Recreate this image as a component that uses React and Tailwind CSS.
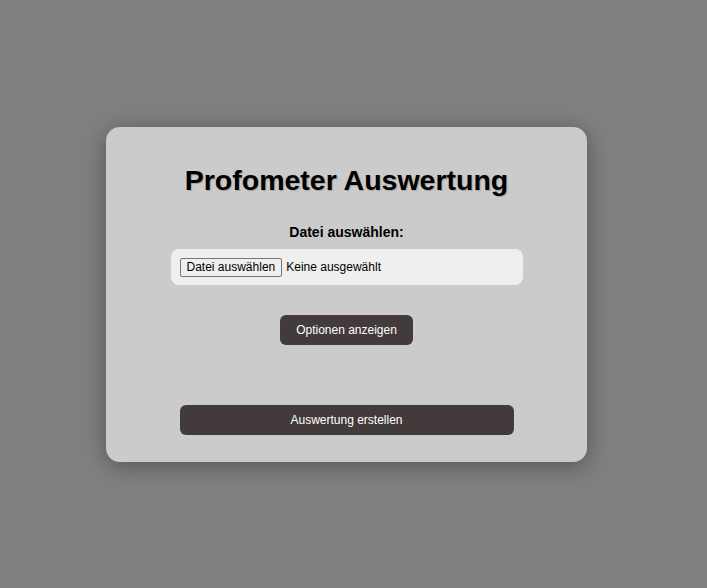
export default function App() {
  return (
    <div className="min-h-[588px] w-full bg-[#808080] flex justify-start pl-[106px] pt-[127px]" style={{ fontFamily: '"Liberation Sans", Arial, sans-serif' }}>
      <div className="w-[481px] h-[335px] bg-[#cbcbcb] rounded-[14px] shadow-[0_4px_24px_rgba(0,0,0,0.35)] flex flex-col items-center pt-[36px]">
        <h1 className="text-[28.5px] font-bold leading-[34px] text-black [text-shadow:1px_1px_1px_rgba(0,0,0,0.2)]">Profometer Auswertung</h1>
        <div className="mt-[26px] text-[14px] font-bold leading-[18px] text-black">Datei auswählen:</div>
        <div className="mt-[8px] w-[352px] h-[36px] bg-[#efefef] rounded-[8px] flex items-center px-[9px]">
          <span className="h-[19px] px-[6px] flex items-center border border-[#767676] rounded-[2px] bg-[#efefef] text-[12px] text-black leading-none">Datei auswählen</span>
          <span className="ml-[4px] text-[12px] text-black">Keine ausgewählt</span>
        </div>
        <button className="mt-[30px] w-[133px] h-[30px] bg-[#433a3b] rounded-[6px] text-white text-[12px]">Optionen anzeigen</button>
        <button className="mt-[60px] w-[334px] h-[30px] bg-[#433a3b] rounded-[6px] text-white text-[12px]">Auswertung erstellen</button>
      </div>
    </div>
  );
}
